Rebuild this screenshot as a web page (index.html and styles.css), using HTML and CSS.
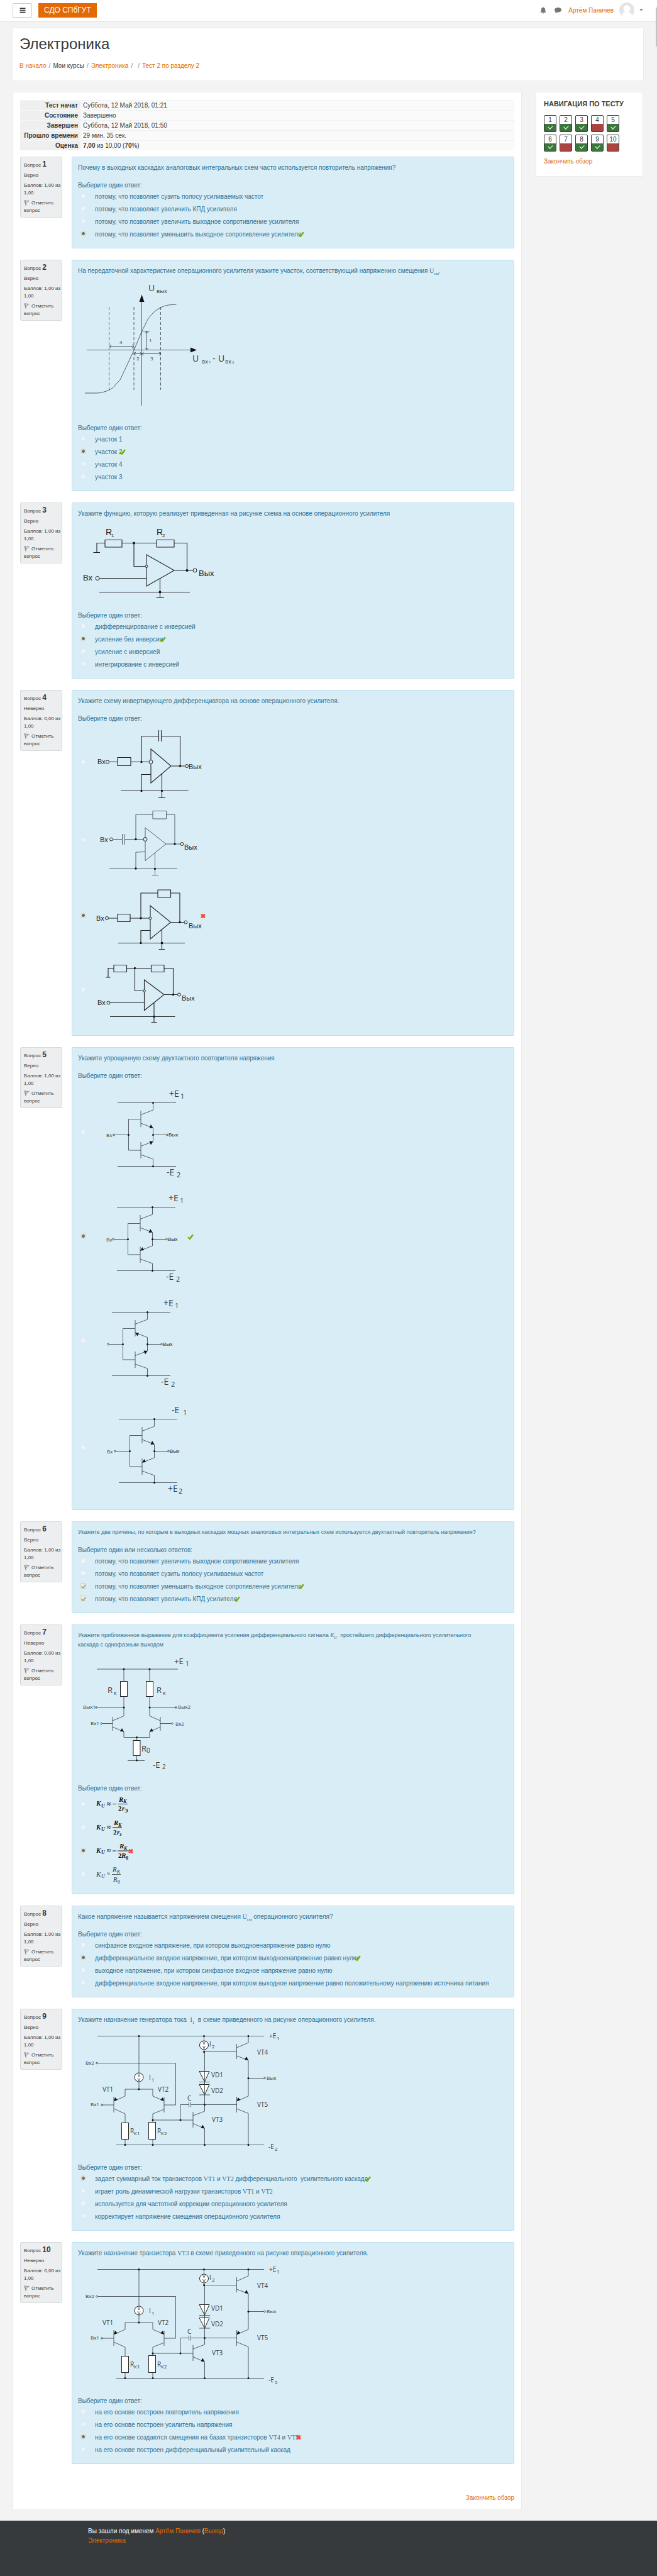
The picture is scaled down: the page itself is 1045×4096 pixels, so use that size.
FILE: index.html
```html
<!DOCTYPE html>
<html lang="ru">
<head>
<meta charset="utf-8">
<meta name="viewport" content="width=device-width, initial-scale=1">
<title>Тест 2 по разделу 2</title>
<link rel="stylesheet" href="styles.css">
</head>
<body>
<svg class="defs" aria-hidden="true">
  <defs>
    <symbol id="flag" viewBox="0 0 16 16"><path d="M2 1 L6 15" stroke="#8a8a8a" stroke-width="2.5" fill="none"/><path d="M3 1.5 L14 3 L6 9 Z" stroke="#999" stroke-width="1.8" fill="#ddd"/></symbol>
    <symbol id="right" viewBox="0 0 18 16"><path d="M2 9 L7 14 L16 2" stroke="#78b000" stroke-width="4.5" fill="none"/></symbol>
    <symbol id="wrong" viewBox="0 0 16 16"><path d="M3 3 L13 13 M13 3 L3 13" stroke="#fc4036" stroke-width="5" fill="none"/></symbol>
    <symbol id="pair" viewBox="0 0 160 172" overflow="visible">
      <path class="w" d="M36 35.5H129M92.5 35.5V47L73 54.5M73 48V74M92.5 75.5V97M73 98V124M73 118L92.5 125V136.5M36 136.5H129M73 61.5H53.5V111H73M31 86.5H53.5M92.5 86.5H114"/>
      <circle cx="92.5" cy="35.5" r="1.5"/><circle cx="92.5" cy="136.5" r="1.5"/><circle cx="92.5" cy="86.5" r="1.5"/><circle cx="53.5" cy="86.5" r="1.5"/>
      <circle class="w" cx="30" cy="86.5" r="1.4"/><circle class="w" cx="115" cy="86.5" r="1.4"/>
      <text class="t8" x="117" y="89">Вых</text>
    </symbol>
    <symbol id="opamp" viewBox="0 0 320 207" overflow="visible">
      <path class="w" d="M31 18.5H296M97 18.5V77M97 91V103M75 103H119M75 103V114L57 122M57 115V140M57 134L75 142V156M75 183V191M38 128H57M119 103V114L137 121.5M137 116V140M137 128H155.5V61.5H31M137 135L119 142V155M119 183V191M61 191.5H296M119 152H183M163 152V127.5H176M176.5 123.5V131.5M179.5 123.5V131.5M180 127.5H252.5M183 139V164M183 145L201.5 138V44L200.5 40M183 157.5L201.5 165.5V191M200.5 18.5V26M200.5 43.5H252.5M252.5 31V55M252.5 37L271 29V18.5M252.5 50L271 57V114L252.5 122M271 85.5H296M252.5 115V140M252.5 134L271 141.5V191"/>
      <path d="M57 122l2-6 4 4zM137 122l-2-6-4 4zM201.5 165.5l-6-1 3-5zM271 57l-6-1 3-5zM252.5 122l2-6 4 4z"/>
      <g class="f"><circle cx="97" cy="84" r="7"/><circle cx="200.5" cy="33" r="7"/><rect x="69.5" y="156.5" width="11" height="26"/><rect x="112.5" y="155.5" width="11" height="27"/><path d="M193 74.5H209L201.5 91ZM193 95.5H209L201.5 112Z"/></g>
      <path class="w" d="M193 91.5H210M193 112H210M201.5 74V112M95 78l2 5 2-5M95 85l2 5 2-5M198.5 27l2 5 2-5M198.5 34l2 5 2-5"/>
      <circle cx="97" cy="18.5" r="1.5"/><circle cx="200.5" cy="18.5" r="1.5"/><circle cx="271" cy="18.5" r="1.5"/><circle cx="97" cy="103" r="1.5"/><circle cx="200.5" cy="43.5" r="1.5"/><circle cx="271" cy="85.5" r="1.5"/><circle cx="201.5" cy="127.5" r="1.5"/><circle cx="119" cy="152" r="1.5"/><circle cx="163" cy="152" r="1.5"/><circle cx="75" cy="191.5" r="1.5"/><circle cx="119" cy="191.5" r="1.5"/><circle cx="201.5" cy="191.5" r="1.5"/><circle cx="271" cy="191.5" r="1.5"/>
      <circle class="w" cx="30" cy="61.5" r="1.3"/><circle class="w" cx="38" cy="128" r="1.3"/><circle class="w" cx="297" cy="85.5" r="1.3"/>
      <g class="n">
        <text class="t8" x="12" y="64">Вх2</text><text class="t8" x="20" y="130">Вх1</text><text class="t8" x="300" y="88">Вых</text>
        <text class="t10" x="39" y="107">VT1</text><text class="t10" x="127" y="107">VT2</text><text class="t10" x="213" y="155">VT3</text><text class="t10" x="285" y="48">VT4</text><text class="t10" x="285" y="131">VT5</text>
        <text class="t10" x="212" y="84">VD1</text><text class="t10" x="212" y="109">VD2</text><text class="t10" x="174" y="121">C</text>
        <text class="t10" x="113" y="88">I</text><text class="t8" x="117" y="91">1</text><text class="t10" x="209" y="35">I</text><text class="t8" x="213" y="38">2</text>
        <text class="t10" x="83" y="173">R</text><text class="t8" x="89" y="176">К1</text><text class="t10" x="126" y="173">R</text><text class="t8" x="132" y="176">К2</text>
        <text class="t10" x="304" y="22">+E</text><text class="t8" x="316" y="25">1</text><text class="t10" x="303" y="198">-E</text><text class="t8" x="313" y="201">2</text>
      </g>
    </symbol>
  </defs>
</svg>

<header class="topbar">
  <button class="menu" type="button" aria-label="Меню"><svg viewBox="0 0 10 10"><path d="M0 1.5H10M0 5H10M0 8.5H10" stroke="#373a3c" stroke-width="1.8"/></svg></button>
  <a class="logo" href="#">СДО СПбГУТ</a>
  <div class="user">
    <a class="bell" href="#" aria-label="Уведомления"><svg viewBox="0 0 20 22"><path d="M10 .5c1 0 1.5.7 1.500 1.500 3.500.8 4.800 3.500 4.800 7 0 4.500 1 6.300 3.200 8.500H.5C2.700 15.300 3.700 13.500 3.700 9c0-3.500 1.300-6.200 4.800-7C8.500 1.200 9 .5 10 .5zM7.500 18.500h5a2.500 2.500 0 0 1-5 0z" fill="#757575"/></svg></a>
    <a class="chat" href="#" aria-label="Сообщения"><svg viewBox="0 0 22 18"><path d="M11 0c6 0 11 3.300 11 7.500S17 15 11 15c-.9 0-1.800-.1-2.600-.2C6.500 16.500 4.500 17.500 1.500 17.800c1-1 1.800-2.200 2-4C1.300 12.400 0 10 0 7.500 0 3.300 5 0 11 0z" fill="#757575"/></svg></a>
    <a class="name" href="#">Артём Паничев</a>
    <svg class="avatar" viewBox="0 0 44 44" aria-hidden="true"><clipPath id="round"><circle cx="22" cy="22" r="22"/></clipPath><g clip-path="url(#round)"><rect width="44" height="44" fill="#e5e5e5"/><circle cx="22" cy="18" r="10" fill="#fff"/><path d="M6 44C8 30 14 27 22 27s14 3 16 17z" fill="#fff"/></g></svg>
    <svg class="caret" viewBox="0 0 10 6" aria-hidden="true"><path d="M0 0H10L5 5.5Z" fill="#e26a00"/></svg>
  </div>
</header>

<div class="page">
  <section class="card heading">
    <h1>Электроника</h1>
    <nav class="crumbs"><a href="#">В начало</a><i>/</i><span>Мои курсы</span><i>/</i><a href="#">Электроника</a><i>/</i><span></span><i>/</i><a href="#">Тест 2 по разделу 2</a></nav>
  </section>

  <div class="columns">
    <main class="card main">
      <table class="summary">
        <tr><th scope="row">Тест начат</th><td>Суббота, 12 Май 2018, 01:21</td></tr>
        <tr><th scope="row">Состояние</th><td>Завершено</td></tr>
        <tr><th scope="row">Завершен</th><td>Суббота, 12 Май 2018, 01:50</td></tr>
        <tr><th scope="row">Прошло времени</th><td>29 мин. 35 сек.</td></tr>
        <tr><th scope="row">Оценка</th><td><b>7,00</b> из 10,00 (<b>70</b>%)</td></tr>
      </table>

      <section class="question">
        <aside class="info"><h2>Вопрос <b>1</b></h2><p>Верно</p><p>Баллов: 1,00 из 1,00</p><p><svg class="flag"><use href="#flag"/></svg>Отметить вопрос</p></aside>
        <div class="body">
          <p class="text">Почему в выходных каскадах аналоговых интегральных схем часто используется повторитель напряжения?</p>
          <p class="prompt">Выберите один ответ:</p>
          <div class="option"><input type="radio" name="q1" id="q1a" disabled><label for="q1a">потому, что позволяет сузить полосу усиливаемых частот</label></div>
          <div class="option"><input type="radio" name="q1" id="q1b" disabled><label for="q1b">потому, что позволяет увеличить КПД усилителя</label></div>
          <div class="option"><input type="radio" name="q1" id="q1c" disabled><label for="q1c">потому, что позволяет увеличить выходное сопротивление усилителя</label></div>
          <div class="option"><input type="radio" name="q1" id="q1d" disabled checked><label for="q1d">потому, что позволяет уменьшить выходное сопротивление усилителя</label><svg class="mark"><use href="#right"/></svg></div>
        </div>
      </section>

      <section class="question">
        <aside class="info"><h2>Вопрос <b>2</b></h2><p>Верно</p><p>Баллов: 1,00 из 1,00</p><p><svg class="flag"><use href="#flag"/></svg>Отметить вопрос</p></aside>
        <div class="body">
          <p class="text">На передаточной характеристике операционного усилителя укажите участок, соответствующий напряжению смещения <span class="serif">U<sub>см</sub></span>.</p>
          <svg class="fig" width="270" height="222" viewBox="0 0 270 222">
            <path class="w" d="M101.5 38V207M14 118.5H180M50 112.5H89M89 124.5H131.5M101.5 88.5H114M109.5 89V118M53 110l-3 2.5 3 2.5M86 110l3 2.5-3 2.5M92 122l-3 2.5 3 2.5M98.5 122l3 2.5-3 2.5M104.5 122l-3 2.5 3 2.5M129 122l3 2.5-3 2.5M107 92l2.5-3 2.5 3M107 115l2.5 3 2.5-3"/>
            <path class="w dash" d="M49.5 50V182M89 50V182M131.5 50V182"/>
            <path d="M101.5 30.5L105.5 42H97.5ZM189 118.5L179 114.5V122.5Z"/>
            <path class="w" d="M11 187H27C31 187 34 187 38 186S46 184 49.7 182S56 179 58 176S65 168 67 166L74.5 150L89 119L101.5 89L108 76C111 69 113 67 115 64.5S121 58 123.6 56S129 52.5 131.7 51S140 47.5 144 47L156.5 46"/>
            <g class="n"><text class="t14" x="112" y="25">U</text><text class="t9" x="125" y="28">вых</text>
            <text class="t8" x="113" y="106">1</text><text class="t8" x="66" y="109">4</text><text class="t8" x="93" y="135">2</text><text class="t8" x="115" y="135">3</text>
            <text class="t14" x="182" y="137">U</text><text class="t9" x="197" y="140">вх</text><text class="t6" x="208" y="140">1</text><text class="t14" x="214" y="137">-</text><text class="t14" x="223" y="137">U</text><text class="t9" x="234" y="140">вх</text><text class="t6" x="245" y="140">2</text></g>
          </svg>
          <p class="prompt">Выберите один ответ:</p>
          <div class="option"><input type="radio" name="q2" id="q2a" disabled><label for="q2a">участок 1</label></div>
          <div class="option"><input type="radio" name="q2" id="q2b" disabled checked><label for="q2b">участок 2</label><svg class="mark"><use href="#right"/></svg></div>
          <div class="option"><input type="radio" name="q2" id="q2c" disabled><label for="q2c">участок 4</label></div>
          <div class="option"><input type="radio" name="q2" id="q2d" disabled><label for="q2d">участок 3</label></div>
        </div>
      </section>

      <section class="question">
        <aside class="info"><h2>Вопрос <b>3</b></h2><p>Верно</p><p>Баллов: 1,00 из 1,00</p><p><svg class="flag"><use href="#flag"/></svg>Отметить вопрос</p></aside>
        <div class="body">
          <p class="text">Укажите функцию, которую реализует приведенная на рисунке схема на основе операционного усилителя</p>
          <svg class="fig" width="240" height="134" viewBox="0 0 240 134">
            <path class="w b" d="M24.5 54.5H35M30 54.5V39.5H43M43 34.5H70V46H43ZM70 39.5H125M125 34.5H153V46H125ZM153 39.5H173.5V83M89 39.5V76.5H107M109 58L153 83L109 108ZM153 83H183M34 95.5H109M130.5 96V126M34 117.5H178M124.5 126.5H137"/>
            <circle cx="89" cy="39.5" r="2"/><circle cx="173.5" cy="83" r="2"/><circle cx="130.5" cy="117.5" r="2"/>
            <g class="o"><circle cx="109" cy="76.5" r="2"/><circle cx="186" cy="83" r="3"/><circle cx="31" cy="95.5" r="3"/></g>
            <g class="n k"><text class="t14" x="44" y="27">R</text><text class="t8" x="53" y="30">1</text><text class="t14" x="125" y="27">R</text><text class="t8" x="134" y="30">2</text><text class="t13" x="192" y="92">Вых</text><text class="t13" x="8" y="99">Вх</text></g>
          </svg>
          <p class="prompt">Выберите один ответ:</p>
          <div class="option"><input type="radio" name="q3" id="q3a" disabled><label for="q3a">дифференцирование с инверсией</label></div>
          <div class="option"><input type="radio" name="q3" id="q3b" disabled checked><label for="q3b">усиление без инверсии</label><svg class="mark"><use href="#right"/></svg></div>
          <div class="option"><input type="radio" name="q3" id="q3c" disabled><label for="q3c">усиление с инверсией</label></div>
          <div class="option"><input type="radio" name="q3" id="q3d" disabled><label for="q3d">интегрирование с инверсией</label></div>
        </div>
      </section>

      <section class="question">
        <aside class="info"><h2>Вопрос <b>4</b></h2><p>Неверно</p><p>Баллов: 0,00 из 1,00</p><p><svg class="flag"><use href="#flag"/></svg>Отметить вопрос</p></aside>
        <div class="body">
          <p class="text">Укажите схему инвертирующего дифференциатора на основе операционного усилителя.</p>
          <p class="prompt">Выберите один ответ:</p>
          <div class="option"><input type="radio" name="q4" id="q4a" disabled><label for="q4a">
            <svg width="172" height="124" viewBox="0 0 172 124">
              <path class="w b" d="M23 61.5H36M36 54.5H57V67.5H36ZM57 61.5H86M74 61.5V20.5H101.5M101.5 11V29M105.5 11V29M105.5 20.5H135.5V68M89 41L121 68L89 95ZM121 68H143M89 81.5H74V107M41 107.5H148.5M106.5 81V118M101 118.5H112"/>
              <circle cx="74" cy="61.5" r="1.7"/><circle cx="135.5" cy="68" r="1.7"/><circle cx="74" cy="107.5" r="1.7"/><circle cx="106.5" cy="107.5" r="1.7"/>
              <g class="o"><circle cx="89" cy="61.5" r="3"/><circle cx="20" cy="61.5" r="2.5"/><circle cx="146" cy="68" r="2.5"/></g>
              <g class="n k"><text class="t11" x="4" y="65">Вх</text><text class="t11" x="149" y="73">Вых</text></g>
            </svg></label></div>
          <div class="option"><input type="radio" name="q4" id="q4b" disabled><label for="q4b">
            <svg width="172" height="124" viewBox="0 0 172 124">
              <path class="w" d="M29 60.5H43M43.5 52V69M47.5 52V69M47.5 60.5H77M65 60.5V21H92M92 15.5H113.5V28H92ZM113.5 21H127V68M80 42L113 68L80 94.5ZM113 68H136M80 80.5L65 81V107M23 107.5H131M95.5 82V117M90.5 117.5H101"/>
              <circle cx="65" cy="60.5" r="1.7"/><circle cx="127" cy="68" r="1.7"/><circle cx="65" cy="107" r="1.7"/><circle cx="95.5" cy="107.5" r="1.7"/>
              <g class="o"><circle cx="80" cy="60.5" r="3"/><circle cx="26" cy="60.5" r="2.5"/><circle cx="138.5" cy="68" r="2.5"/></g>
              <g class="n k"><text class="t11" x="8" y="65">Вх</text><text class="t11" x="142" y="77">Вых</text></g>
            </svg></label></div>
          <div class="option"><input type="radio" name="q4" id="q4c" disabled checked><label for="q4c">
            <svg width="172" height="117" viewBox="0 0 172 117">
              <path class="w b" d="M22 62H36M36 55.5H56V67.5H36ZM56 62H86M73 62V22H100M100 17H120.5V29H100ZM120.5 22H135V68.5M88 42L120.5 68.5L88 95ZM120.5 68.5H142M88 81.5H73V101M37 101.5H143M106.5 80V111M101.5 111.5H111"/>
              <circle cx="73" cy="62" r="1.7"/><circle cx="135" cy="68.5" r="1.7"/><circle cx="73" cy="101.5" r="1.7"/><circle cx="106.5" cy="101.5" r="2"/>
              <g class="o"><circle cx="88" cy="62" r="2"/><circle cx="19" cy="62" r="2.5"/><circle cx="144.5" cy="68.5" r="2.5"/></g>
              <g class="n k"><text class="t11" x="2" y="66">Вх</text><text class="t11" x="149" y="78">Вых</text></g>
            </svg></label><svg class="mark"><use href="#wrong"/></svg></div>
          <div class="option"><input type="radio" name="q4" id="q4d" disabled><label for="q4d">
            <svg width="172" height="119" viewBox="0 0 172 119">
              <path class="w b" d="M17 39H24.5M21 39V24.5H30M30 19.5H50.5V30.5H30ZM50.5 24.5H89.5M89.5 19.5H110V30.5H89.5ZM110 24.5H124.5V66.5M63.5 24.5V60.5H76M78.5 43L110 66.5L78.5 91.5ZM110 66.5H131M24 79.5H78.5M94 80V110.5M24 101.5H127.5M89.5 110.5H98.5"/>
              <circle cx="63.5" cy="24.5" r="1.7"/><circle cx="124.5" cy="66.5" r="1.7"/><circle cx="94" cy="101.5" r="1.7"/>
              <g class="o"><circle cx="78.5" cy="60.5" r="1.8"/><circle cx="21.5" cy="79.5" r="2.5"/><circle cx="134" cy="66.5" r="2.5"/></g>
              <g class="n k"><text class="t11" x="4" y="83">Вх</text><text class="t11" x="138" y="76">Вых</text></g>
            </svg></label></div>
        </div>
      </section>

      <section class="question">
        <aside class="info"><h2>Вопрос <b>5</b></h2><p>Верно</p><p>Баллов: 1,00 из 1,00</p><p><svg class="flag"><use href="#flag"/></svg>Отметить вопрос</p></aside>
        <div class="body">
          <p class="text">Укажите упрощенную схему двухтактного повторителя напряжения</p>
          <p class="prompt">Выберите один ответ:</p>
          <div class="option"><input type="radio" name="q5" id="q5a" disabled><label for="q5a">
            <svg width="152" height="165" viewBox="0 0 152 165">
              <use href="#pair" width="160" height="172"/><path class="w" d="M73 68L92.5 75.5M73 104.5L92.5 97"/><path d="M92.5 75.5l-6 .5 2.5-6zM92.5 97l-6-.5 2.5 6z"/>
              <g class="n"><text class="t8" x="18" y="90">Вх</text><text class="t14" x="118" y="26">+E</text><text class="t11" x="136" y="29">1</text><text class="t14" x="114" y="151">-E</text><text class="t11" x="130" y="154">2</text></g>
            </svg></label></div>
          <div class="option"><input type="radio" name="q5" id="q5b" disabled checked><label for="q5b">
            <svg width="152" height="166" viewBox="0 0 152 166"><g transform="translate(-1 1)">
              <use href="#pair" width="160" height="172"/><path class="w" d="M73 68L92.5 75.5M73 104.5L92.5 97"/><path d="M92.5 75.5l-6 .5 2.5-6zM73 104.5l6-.5-2.5-5z"/>
              <g class="n"><text class="t8" x="19" y="90">Вх</text><text class="t14" x="118" y="26">+E</text><text class="t11" x="136" y="29">1</text><text class="t14" x="114" y="151">-E</text><text class="t11" x="130" y="154">2</text></g></g>
            </svg></label><svg class="mark"><use href="#right"/></svg></div>
          <div class="option"><input type="radio" name="q5" id="q5c" disabled><label for="q5c">
            <svg width="152" height="167" viewBox="0 0 152 167"><g transform="translate(-9 2)">
              <use href="#pair" width="160" height="172"/><path class="w" d="M73 68L92.5 75.5M73 104.5L92.5 97"/><path d="M73 68l6 .5-2.5 5zM92.5 97l-6-.5 2.5 6z"/>
              <g class="n"><text class="t14" x="118" y="26">+E</text><text class="t11" x="136" y="29">1</text><text class="t14" x="114" y="151">-E</text><text class="t11" x="130" y="154">2</text></g></g>
            </svg></label></div>
          <div class="option"><input type="radio" name="q5" id="q5d" disabled><label for="q5d">
            <svg width="152" height="172" viewBox="0 0 152 172"><g transform="translate(2 5)">
              <use href="#pair" width="160" height="172"/><path class="w" d="M73 68L92.5 75.5M73 104.5L92.5 97"/><path d="M92.5 75.5l-6 .5 2.5-6zM73 104.5l6-.5-2.5-5z"/>
              <g class="n"><text class="t8" x="17" y="90">Вх</text><text class="t14" x="120" y="26">-E</text><text class="t11" x="138" y="29">1</text><text class="t14" x="114" y="151">+E</text><text class="t11" x="131" y="154">2</text></g></g>
            </svg></label></div>
        </div>
      </section>

      <section class="question">
        <aside class="info"><h2>Вопрос <b>6</b></h2><p>Верно</p><p>Баллов: 1,00 из 1,00</p><p><svg class="flag"><use href="#flag"/></svg>Отметить вопрос</p></aside>
        <div class="body">
          <p class="text long">Укажите две причины, по которым в выходных каскадах мощных аналоговых интегральных схем используется двухтактный повторитель напряжения?</p>
          <p class="prompt">Выберите один или несколько ответов:</p>
          <div class="option"><input type="checkbox" id="q6a" disabled><label for="q6a">потому, что позволяет увеличить выходное сопротивление усилителя</label></div>
          <div class="option"><input type="checkbox" id="q6b" disabled><label for="q6b">потому, что позволяет сузить полосу усиливаемых частот</label></div>
          <div class="option"><input type="checkbox" id="q6c" disabled checked><label for="q6c">потому, что позволяет уменьшить выходное сопротивление усилителя</label><svg class="mark"><use href="#right"/></svg></div>
          <div class="option"><input type="checkbox" id="q6d" disabled checked><label for="q6d">потому, что позволяет увеличить КПД усилителя</label><svg class="mark"><use href="#right"/></svg></div>
        </div>
      </section>

      <section class="question">
        <aside class="info"><h2>Вопрос <b>7</b></h2><p>Неверно</p><p>Баллов: 0,00 из 1,00</p><p><svg class="flag"><use href="#flag"/></svg>Отметить вопрос</p></aside>
        <div class="body">
          <p class="text long">Укажите приближенное выражение для коэффициента усиления дифференциального сигнала <span class="serif"><em>K<sub>U</sub></em></span>&nbsp; простейшего дифференциального усилительного<br>каскада с однофазным выходом</p>
          <svg class="fig" width="200" height="200" viewBox="0 0 200 200">
            <path class="w" d="M30 31H159M73 31V51M114 31V51M73 75V105.5L55 113M55 107V129M55 123L73 130.5V139.5H114V130.5L131 123M131 107V129M131 113L114 105.5V75M30 92H73M114 92H156M38 117.5H55M131 117.5H149M93.5 139.5V145M93.5 168V176M79 176.5H106"/>
            <g class="f"><rect x="67.5" y="50.5" width="11" height="24"/><rect x="108.5" y="50.5" width="11" height="24"/><rect x="88" y="144.5" width="11" height="24"/></g>
            <path d="M73 130.5l-6-.5 3-5zM114 130.5l6-.5-3-5z"/>
            <circle cx="73" cy="31" r="1.5"/><circle cx="114" cy="31" r="1.5"/><circle cx="73" cy="92" r="1.5"/><circle cx="114" cy="92" r="1.5"/><circle cx="93.5" cy="139.5" r="1.5"/><circle cx="93.5" cy="176" r="1.5"/>
            <circle class="w" cx="29" cy="92" r="1.3"/><circle class="w" cx="156" cy="92" r="1.3"/><circle class="w" cx="37" cy="117.5" r="1.3"/><circle class="w" cx="150" cy="117.5" r="1.3"/>
            <g class="n"><text class="t13" x="153" y="23">+E</text><text class="t10" x="171" y="26">1</text><text class="t13" x="47" y="69">R</text><text class="t9" x="57" y="72">к</text><text class="t13" x="125" y="69">R</text><text class="t9" x="135" y="72">к</text>
            <text class="t8" x="8" y="94">Вых1</text><text class="t8" x="159" y="94">Вых2</text><text class="t8" x="20" y="120">Вх1</text><text class="t8" x="155" y="121">Вх2</text>
            <text class="t13" x="101" y="162">R</text><text class="t10" x="109" y="164">0</text><text class="t13" x="119" y="188">-E</text><text class="t10" x="134" y="190">2</text></g>
          </svg>
          <p class="prompt">Выберите один ответ:</p>
          <div class="option"><input type="radio" name="q7" id="q7a" disabled><label for="q7a"><svg width="56" height="37" viewBox="0 0 56 37" class="m"><path class="w b" d="M28 17.5H34M36 17.5H52"/><text class="t11" x="2" y="20">K</text><text class="t8" x="10" y="23">U</text><text class="t11 u" x="19" y="21">≈</text><text class="t11" x="38" y="14">R</text><text class="t8" x="45" y="16">K</text><text class="t11 u" x="37" y="28">2</text><text class="t11" x="43" y="28">r</text><text class="t8 u" x="47" y="31">Э</text></svg></label></div>
          <div class="option"><input type="radio" name="q7" id="q7b" disabled><label for="q7b"><svg width="56" height="37" viewBox="0 0 56 37" class="m"><path class="w b" d="M28 18H43"/><text class="t11" x="2" y="21">K</text><text class="t8" x="10" y="23">U</text><text class="t11 u" x="19" y="21">≈</text><text class="t11" x="30" y="14">R</text><text class="t8" x="37" y="17">K</text><text class="t11 u" x="29" y="29">2</text><text class="t11" x="35" y="29">r</text><text class="t8" x="39" y="31">э</text></svg></label></div>
          <div class="option"><input type="radio" name="q7" id="q7c" disabled checked><label for="q7c"><svg width="57" height="37" viewBox="0 0 57 37" class="m"><path class="w b" d="M28 18H34M36 18H54"/><text class="t11" x="2" y="21">K</text><text class="t8" x="10" y="23">U</text><text class="t11 u" x="19" y="21">≈</text><text class="t11" x="39" y="14">R</text><text class="t8" x="46" y="17">K</text><text class="t11 u" x="37" y="29">2</text><text class="t11" x="42" y="29">R</text><text class="t8 u" x="49" y="32">0</text></svg></label><svg class="mark"><use href="#wrong"/></svg></div>
          <div class="option"><input type="radio" name="q7" id="q7d" disabled><label for="q7d"><svg width="56" height="37" viewBox="0 0 56 37" class="m l"><path class="w" d="M27 18.5H41"/><text class="t11" x="2" y="22">K</text><text class="t8" x="10" y="24">U</text><text class="t9 u" x="19" y="20">≈</text><text class="t11" x="28" y="14">R</text><text class="t8" x="35" y="17">K</text><text class="t11" x="29" y="30">R</text><text class="t8 u" x="36" y="33">0</text></svg></label></div>
        </div>
      </section>

      <section class="question">
        <aside class="info"><h2>Вопрос <b>8</b></h2><p>Верно</p><p>Баллов: 1,00 из 1,00</p><p><svg class="flag"><use href="#flag"/></svg>Отметить вопрос</p></aside>
        <div class="body">
          <p class="text">Какое напряжение называется напряжением смещения <span class="serif">U<sub>см</sub></span> операционного усилителя?</p>
          <p class="prompt">Выберите один ответ:</p>
          <div class="option"><input type="radio" name="q8" id="q8a" disabled><label for="q8a">синфазное входное напряжение, при котором выходноенапряжение равно нулю</label></div>
          <div class="option"><input type="radio" name="q8" id="q8b" disabled checked><label for="q8b">дифференциальное входное напряжение, при котором выходноенапряжение равно нулю</label><svg class="mark"><use href="#right"/></svg></div>
          <div class="option"><input type="radio" name="q8" id="q8c" disabled><label for="q8c">выходное напряжение, при котором синфазное входное напряжение равно нулю</label></div>
          <div class="option"><input type="radio" name="q8" id="q8d" disabled><label for="q8d">дифференциальное входное напряжение, при котором выходное напряжение равно положительному напряжению источника питания</label></div>
        </div>
      </section>

      <section class="question">
        <aside class="info"><h2>Вопрос <b>9</b></h2><p>Верно</p><p>Баллов: 1,00 из 1,00</p><p><svg class="flag"><use href="#flag"/></svg>Отметить вопрос</p></aside>
        <div class="body">
          <p class="text">Укажите назначение генератора тока &nbsp;<span class="serif">I<sub>1</sub></span>&nbsp; в схеме приведенного на рисунке операционного усилителя.</p>
          <svg class="fig" width="330" height="207" viewBox="0 0 330 207"><use href="#opamp" width="320" height="207"/></svg>
          <p class="prompt">Выберите один ответ:</p>
          <div class="option"><input type="radio" name="q9" id="q9a" disabled checked><label for="q9a">задает суммарный ток транзисторов <span class="serif">VT1</span> и <span class="serif">VT2</span> дифференциального&nbsp; усилительного каскада</label><svg class="mark"><use href="#right"/></svg></div>
          <div class="option"><input type="radio" name="q9" id="q9b" disabled><label for="q9b">играет роль динамической нагрузки транзисторов <span class="serif">VT1</span> и <span class="serif">VT2</span></label></div>
          <div class="option"><input type="radio" name="q9" id="q9c" disabled><label for="q9c">используется для частотной коррекции операционного усилителя</label></div>
          <div class="option"><input type="radio" name="q9" id="q9d" disabled><label for="q9d">корректирует напряжение смещения операционного усилителя</label></div>
        </div>
      </section>

      <section class="question">
        <aside class="info"><h2>Вопрос <b>10</b></h2><p>Неверно</p><p>Баллов: 0,00 из 1,00</p><p><svg class="flag"><use href="#flag"/></svg>Отметить вопрос</p></aside>
        <div class="body">
          <p class="text">Укажите назначение транзистора <span class="serif">VT3</span> в схеме приведенного на рисунке операционного усилителя.</p>
          <svg class="fig" width="330" height="207" viewBox="0 0 330 207"><use href="#opamp" width="320" height="207"/></svg>
          <p class="prompt">Выберите один ответ:</p>
          <div class="option"><input type="radio" name="q10" id="q10a" disabled><label for="q10a">на его основе построен повторитель напряжения</label></div>
          <div class="option"><input type="radio" name="q10" id="q10b" disabled><label for="q10b">на его основе построен усилитель напряжения</label></div>
          <div class="option"><input type="radio" name="q10" id="q10c" disabled checked><label for="q10c">на его основе создаются смещения на базах транзисторов <span class="serif">VT4</span> и <span class="serif">VT5</span></label><svg class="mark"><use href="#wrong"/></svg></div>
          <div class="option"><input type="radio" name="q10" id="q10d" disabled><label for="q10d">на его основе построен дифференциальный усилительный каскад</label></div>
        </div>
      </section>

      <div class="finish"><a href="#">Закончить обзор</a></div>
    </main>

    <aside class="card side">
      <h2>Навигация по тесту</h2>
      <nav class="grid">
        <a class="ok" href="#">1</a><a class="ok" href="#">2</a><a class="ok" href="#">3</a><a class="bad" href="#">4</a><a class="ok" href="#">5</a>
        <a class="ok" href="#">6</a><a class="bad" href="#">7</a><a class="ok" href="#">8</a><a class="ok" href="#">9</a><a class="bad" href="#">10</a>
      </nav>
      <a href="#">Закончить обзор</a>
    </aside>
  </div>
</div>

<footer class="footer">
  <p>Вы зашли под именем <a href="#">Артём Паничев</a> (<a href="#">Выход</a>)</p>
  <p><a href="#">Электроника</a></p>
</footer>
</body>
</html>
```
FILE: styles.css
```css
* { box-sizing: border-box; }
html { height: 100%; }
body {
  margin: 0;
  min-height: 100%;
  display: flex;
  flex-direction: column;
  position: relative;
  background: #f3f3f3;
  color: #373a3c;
  font: 10px/15px "Liberation Sans", Arial, sans-serif;
}
/* scroll indicator along the window edge */
body::after {
  content: "";
  position: absolute;
  top: 12px;
  right: 0;
  width: 2px;
  height: 62px;
  background: #c1c1c1;
}
h1, h2, p { margin: 0; font-weight: normal; }
a { color: #e26a00; text-decoration: none; }
.defs { position: absolute; width: 0; height: 0; }
svg { display: block; }

.topbar {
  display: flex;
  align-items: center;
  height: 35px;
  padding: 0 22px 2px 20px;
  background: #fff;
  border-bottom: 1px solid #dfe0e1;
}
.menu {
  width: 31px;
  height: 23px;
  padding: 0;
  display: grid;
  place-items: center;
  background: #fff;
  border: 1px solid #ccc;
  border-radius: 2px;
}
.menu svg { width: 10px; height: 9px; }
.logo {
  margin-left: 10px;
  padding: 0 9px;
  background: #e26a00;
  color: #fff;
  font-size: 12px;
  line-height: 23px;
}
.user { display: flex; align-items: center; margin-left: auto; }
.bell svg { width: 10px; height: 11px; }
.chat svg { width: 11px; height: 9px; }
.chat { margin-left: 13px; }
.name { margin-left: 11px; }
.avatar { width: 24px; height: 24px; margin-left: 9px; }
.caret { width: 6px; height: 4px; margin-left: 8px; }

.page { padding: 9px 21px 17px 19px; }
.card { background: #fff; border: 1px solid #ebecec; }
.heading { height: 85px; padding: 12px 11px; }
.heading h1 { font-size: 24px; line-height: 26px; }
.crumbs { display: flex; margin-top: 14px; }
.crumbs i { margin: 0 4px; color: #818a91; font-style: normal; }
.columns {
  display: flex;
  align-items: flex-start;
  gap: 22px;
  margin-top: 17px;
  padding: 0 1px;
}
.main { flex: 1; min-width: 0; padding: 12px 11px 11px; }
.side { width: 171px; padding: 10px 12px 16px; }

.summary { width: 100%; border-collapse: separate; border-spacing: 0; margin-bottom: 10px; background: #fafafa; }
.summary th, .summary td { height: 16px; padding: 0 4px; border-top: 1px solid #f0f1f1; line-height: 15px; }
.summary th { width: 96px; background: #efefef; text-align: right; border-color: #f6f6f6; white-space: nowrap; }

.question { display: flex; align-items: flex-start; gap: 15px; margin-bottom: 18px; }
.info {
  width: 67px;
  flex: none;
  padding: 6px 0 4px 5px;
  background: #eceeef;
  border: 1px solid #d6dadc;
  border-radius: 2px;
  font-size: 8px;
  line-height: 12px;
}
.info h2 { font-size: 8px; line-height: 12px; }
.info h2 b { font-size: 12px; line-height: 10px; }
.info p { margin-top: 4px; }
.flag { display: inline-block; width: 9px; height: 9px; margin-right: 3px; vertical-align: -2px; }
.body {
  flex: 1;
  min-width: 0;
  padding: 9px 9px 12px;
  background: #d9edf7;
  border: 1px solid #bcdff1;
  border-radius: 2px;
  color: #31708f;
}
.long { font-size: 9px; }
.prompt { margin-top: 13px; }
.serif { font-family: "Liberation Serif", "Times New Roman", serif; }
sub { font-size: 7px; line-height: 0; vertical-align: -3px; }
.option { display: flex; align-items: center; min-height: 20px; }
.option input {
  appearance: none;
  flex: none;
  width: 9px;
  height: 9px;
  margin: 0 14px 2px 4px;
  background: #ebf4fb;
  border: 1px solid #dde5e9;
}
.option input[type="radio"] { border-radius: 50%; }
.option input:checked { border-color: #d8d5bd; background: #ebebdd; }
.option input[type="radio"]:checked { background: radial-gradient(circle, #6f6f68 0 2px, #ebebdd 3px); }
.option input[type="checkbox"]:checked { position: relative; }
.option input[type="checkbox"]:checked::after {
  content: "";
  position: absolute;
  left: 2px;
  top: 0;
  width: 3px;
  height: 6px;
  border: solid #6f6f68;
  border-width: 0 1px 1px 0;
  transform: rotate(40deg);
}
.mark { flex: none; width: 10px; height: 9px; margin-left: -5px; }

/* circuit drawings */
.w { fill: none; stroke: #333b40; stroke-width: 0.8; }
.b { stroke: #222; stroke-width: 1.1; }
.f { fill: #fff; stroke: #222; stroke-width: 1; }
.o { fill: #d9edf7; stroke: #222; stroke-width: 1; }
.dash { stroke-dasharray: 5 3; }
.fig, .option label svg { overflow: visible; fill: #111; font-family: "Open Sans", sans-serif; }
.n { fill: #333b40; }
.k { fill: #1c1c1c; font-family: "Liberation Sans", Arial, sans-serif; }
.t6 { font-size: 6px; }
.t8 { font-size: 8px; }
.t9 { font-size: 9px; }
.t10 { font-size: 10px; }
.t11 { font-size: 11px; }
.t13 { font-size: 13px; }
.t14 { font-size: 14px; }
.option label .m { font-family: "Liberation Serif", serif; font-style: italic; font-weight: bold; }
.option label .l { font-weight: normal; fill: #333; }
.m .u { font-style: normal; }

.side h2 { font-size: 11px; font-weight: bold; line-height: 16px; text-transform: uppercase; white-space: nowrap; }
.grid { display: grid; grid-template-columns: repeat(5, 20px); gap: 4px 5px; margin: 10px 0 8px; }
.grid a {
  position: relative;
  height: 27px;
  border: 1px solid #373a3c;
  border-radius: 2px;
  background: linear-gradient(#fff 13px, #3c763d 13px);
  color: #373a3c;
  line-height: 13px;
  text-align: center;
}
.grid .bad { background: linear-gradient(#fff 13px, #a94442 13px); }
.grid .ok::after {
  content: "";
  position: absolute;
  left: 6px;
  top: 15px;
  width: 6px;
  height: 4px;
  border: solid #fff;
  border-width: 0 0 1px 1px;
  transform: rotate(-45deg);
}
.finish { margin-top: 46px; text-align: right; }
.footer { flex: 1; min-height: 89px; padding: 9px 140px; background: #373a3c; color: #fff; }
```
